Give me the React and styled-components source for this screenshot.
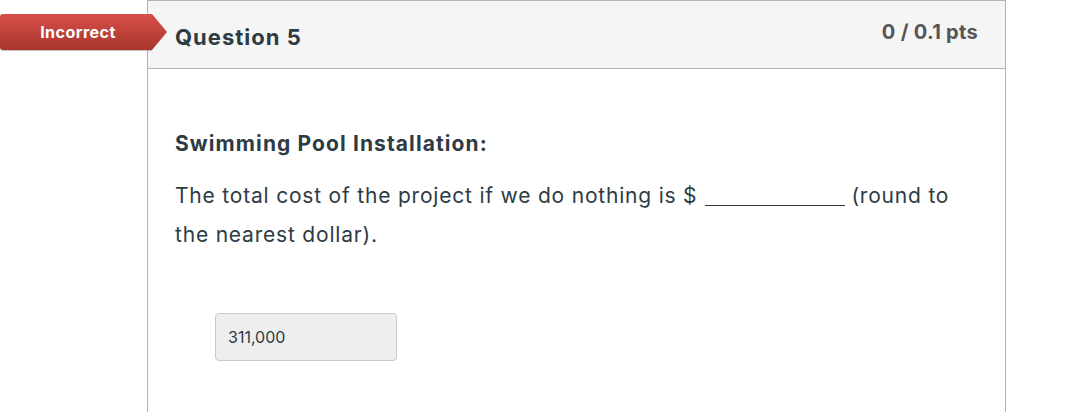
import React from "react";
import styled, { createGlobalStyle } from "styled-components";

const GlobalStyle = createGlobalStyle`
  html, body {
    margin: 0;
    padding: 0;
    background: #fff;
    font-family: Inter, Lato, "Liberation Sans", sans-serif;
    color: #2d3b45;
  }
`;

const Page = styled.div`
  position: relative;
  width: 1072px;
  height: 412px;
  overflow: hidden;
`;

const Card = styled.div`
  margin-left: 147px;
  width: 857px;
  height: 430px;
  border: 1px solid #b4b4b4;
  border-bottom: none;
`;

const Header = styled.div`
  display: flex;
  align-items: center;
  justify-content: space-between;
  height: 67px;
  padding: 0 27px;
  background: #f5f5f5;
  border-bottom: 1px solid #b4b4b4;
`;

const Title = styled.h2`
  margin: 5px 0 0;
  font-size: 22px;
  letter-spacing: 1px;
  font-weight: 700;
  color: #2d3b45;
`;

const Points = styled.span`
  margin-top: -6px;
  font-size: 20px;
  letter-spacing: 0.3px;
  font-weight: 700;
  color: #555;
`;

const Badge = styled.div`
  position: absolute;
  left: 0;
  top: 14px;
  height: 36px;
  width: 152px;
  display: flex;
  align-items: center;
  justify-content: center;
  padding-left: 4px;
  box-sizing: border-box;
  color: #fff;
  font-size: 16px;
  letter-spacing: 0.5px;
  font-weight: 700;
  background: linear-gradient(#d7504a, #a9352d);
  border-radius: 3px 0 0 3px;
  box-shadow: 0 1px 1px rgba(0, 0, 0, 0.25);

  &::after {
    content: "";
    position: absolute;
    right: -15px;
    top: 0;
    width: 15px;
    height: 36px;
    background: linear-gradient(#d7504a, #a9352d);
    clip-path: polygon(0 0, 100% 50%, 0 100%);
  }
`;

const Body = styled.div`
  padding: 62px 27px 0;
`;

const Heading = styled.p`
  margin: 0 0 20px;
  font-size: 21px;
  letter-spacing: 1.1px;
  font-weight: 700;
  color: #2d3b45;
`;

const Text = styled.p`
  margin: 0;
  font-size: 21px;
  letter-spacing: 0.8px;
  line-height: 39px;
  color: #2d3b45;
`;

const Blank = styled.span`
  display: inline-block;
  width: 140px;
  margin: 0 6px 0 8px;
  border-bottom: 1px solid #2d3b45;
  vertical-align: -3px;
`;

const AnswerBox = styled.div`
  margin: 59px 0 0 40px;
  width: 182px;
  height: 48px;
  box-sizing: border-box;
  display: flex;
  align-items: center;
  padding-left: 12px;
  background: #eeeeee;
  border: 1px solid #c9c9c9;
  border-radius: 4px;
  font-size: 16px;
  color: #2d3b45;
`;

export default function App() {
  return (
    <Page>
      <GlobalStyle />
      <Badge>Incorrect</Badge>
      <Card>
        <Header>
          <Title>Question 5</Title>
          <Points>0 / 0.1 pts</Points>
        </Header>
        <Body>
          <Heading>Swimming Pool Installation:</Heading>
          <Text>
            The total cost of the project if we do nothing is $
            <Blank />
            (round to the nearest dollar).
          </Text>
          <AnswerBox>311,000</AnswerBox>
        </Body>
      </Card>
    </Page>
  );
}
